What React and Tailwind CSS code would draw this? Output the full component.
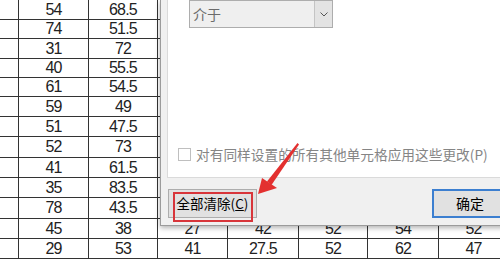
import React from 'react';

const rowH = ['h-[20px]', 'h-[19px]', 'h-[20px]', 'h-[19px]', 'h-[19px]', 'h-[20px]', 'h-[20px]', 'h-[21px]', 'h-[20px]', 'h-[20px]', 'h-[21px]', 'h-[20px]', 'h-[20px]'];
const colW = ['w-[19px]', 'w-[70px]', 'w-[69px]', 'w-[70px]', 'w-[71px]', 'w-[69px]', 'w-[71px]', 'w-[70px]'];

// spreadsheet rows: first column is empty, the rest are scores
const rows = [
  ['', '54', '68.5', '36', '48', '55', '61', '50'],
  ['', '74', '51.5', '44', '39', '62', '58', '47'],
  ['', '31', '72', '52', '41', '49', '60', '53'],
  ['', '40', '55.5', '38', '46', '57', '52', '44'],
  ['', '61', '54.5', '47', '33', '51', '49', '58'],
  ['', '59', '49', '42', '55', '46', '63', '51'],
  ['', '51', '47.5', '35', '40', '53', '57', '49'],
  ['', '52', '73', '48', '37', '50', '55', '46'],
  ['', '41', '61.5', '33', '44', '58', '52', '54'],
  ['', '35', '83.5', '45', '38', '47', '59', '50'],
  ['', '78', '43.5', '39', '49', '52', '56', '48'],
  ['', '45', '38', '27', '42', '52', '54', '52'],
  ['', '29', '53', '41', '27.5', '52', '62', '47'],
];

function Sheet() {
  return (
    <div className="flex flex-col font-['Liberation_Sans',sans-serif] text-[16px] tracking-[-0.8px] text-[#222]">
      {rows.map((r, i) => (
        <div key={i} className={`flex ${rowH[i]}`}>
          {r.map((v, j) => (
            <div
              key={j}
              className={`${colW[j]} shrink-0 flex items-center justify-center border-r border-b border-[#333]`}
            >
              {v}
            </div>
          ))}
        </div>
      ))}
    </div>
  );
}

function Dialog() {
  return (
    <div className="absolute left-[160px] top-0 w-[350px] h-[226px] bg-[#f0f0f0] border-l border-b border-[#9b9b9b] shadow-[0_2px_5px_rgba(0,0,0,0.3)] flex flex-col font-['Noto_Sans_CJK_SC',sans-serif]">
      {/* white tab page */}
      <div className="ml-[6px] h-[178px] bg-white border-l border-b border-[#dadada] flex flex-col">
        <div className="ml-[21px] w-[144px] h-[28px] border border-[#adadad] bg-[#efefef] flex">
          <div className="flex-1 flex items-center pl-[3px] text-[14px] text-[#6b6b6b]">介于</div>
          <div className="w-[18px] border-l border-[#c4c4c4] bg-[#e3e3e3] flex items-center justify-center">
            <svg width="8" height="5" viewBox="0 0 8 5">
              <path d="M0.5 0.5 L4 4 L7.5 0.5" fill="none" stroke="#555" strokeWidth="1" />
            </svg>
          </div>
        </div>
        <div className="mt-[120px] ml-[10px] flex items-center gap-[5px]">
          <div className="w-[13px] h-[13px] border border-[#bfbfbf] bg-white" />
          <span className="text-[13.7px] leading-none text-[#858585] whitespace-nowrap">
            对有同样设置的所有其他单元格应用这些更改(P)
          </span>
        </div>
      </div>
      {/* buttons */}
      <div className="mt-[11px] flex justify-between">
        <div className="relative ml-[7px] w-[89px] h-[29px] border border-[#adadad] bg-[#e1e1e1] flex items-center justify-center text-[13.5px] text-black">
          <span>
            全部清除(<span className="underline">C</span>)
          </span>
          <div className="absolute left-[4px] top-[2px] w-[80px] h-[30px] border-2 border-[#d8353a]" />
        </div>
        <div className="mr-[2px] w-[76px] h-[29px] border-2 border-[#3c7fd0] bg-[#e1e1e1] flex items-center justify-center text-[14px] text-black">
          确定
        </div>
      </div>
    </div>
  );
}

function Arrow() {
  return (
    <svg className="absolute left-0 top-0 pointer-events-none" width="500" height="259" viewBox="0 0 500 259">
      <polygon points="297.5,143 299,144.5 271.5,185 267,181.5" fill="#e3302f" />
      <polygon points="258,194 262,178 277,188" fill="#e3302f" />
    </svg>
  );
}

export default function App() {
  return (
    <div className="relative w-[500px] h-[259px] overflow-hidden bg-white">
      <Sheet />
      <Dialog />
      <Arrow />
    </div>
  );
}
